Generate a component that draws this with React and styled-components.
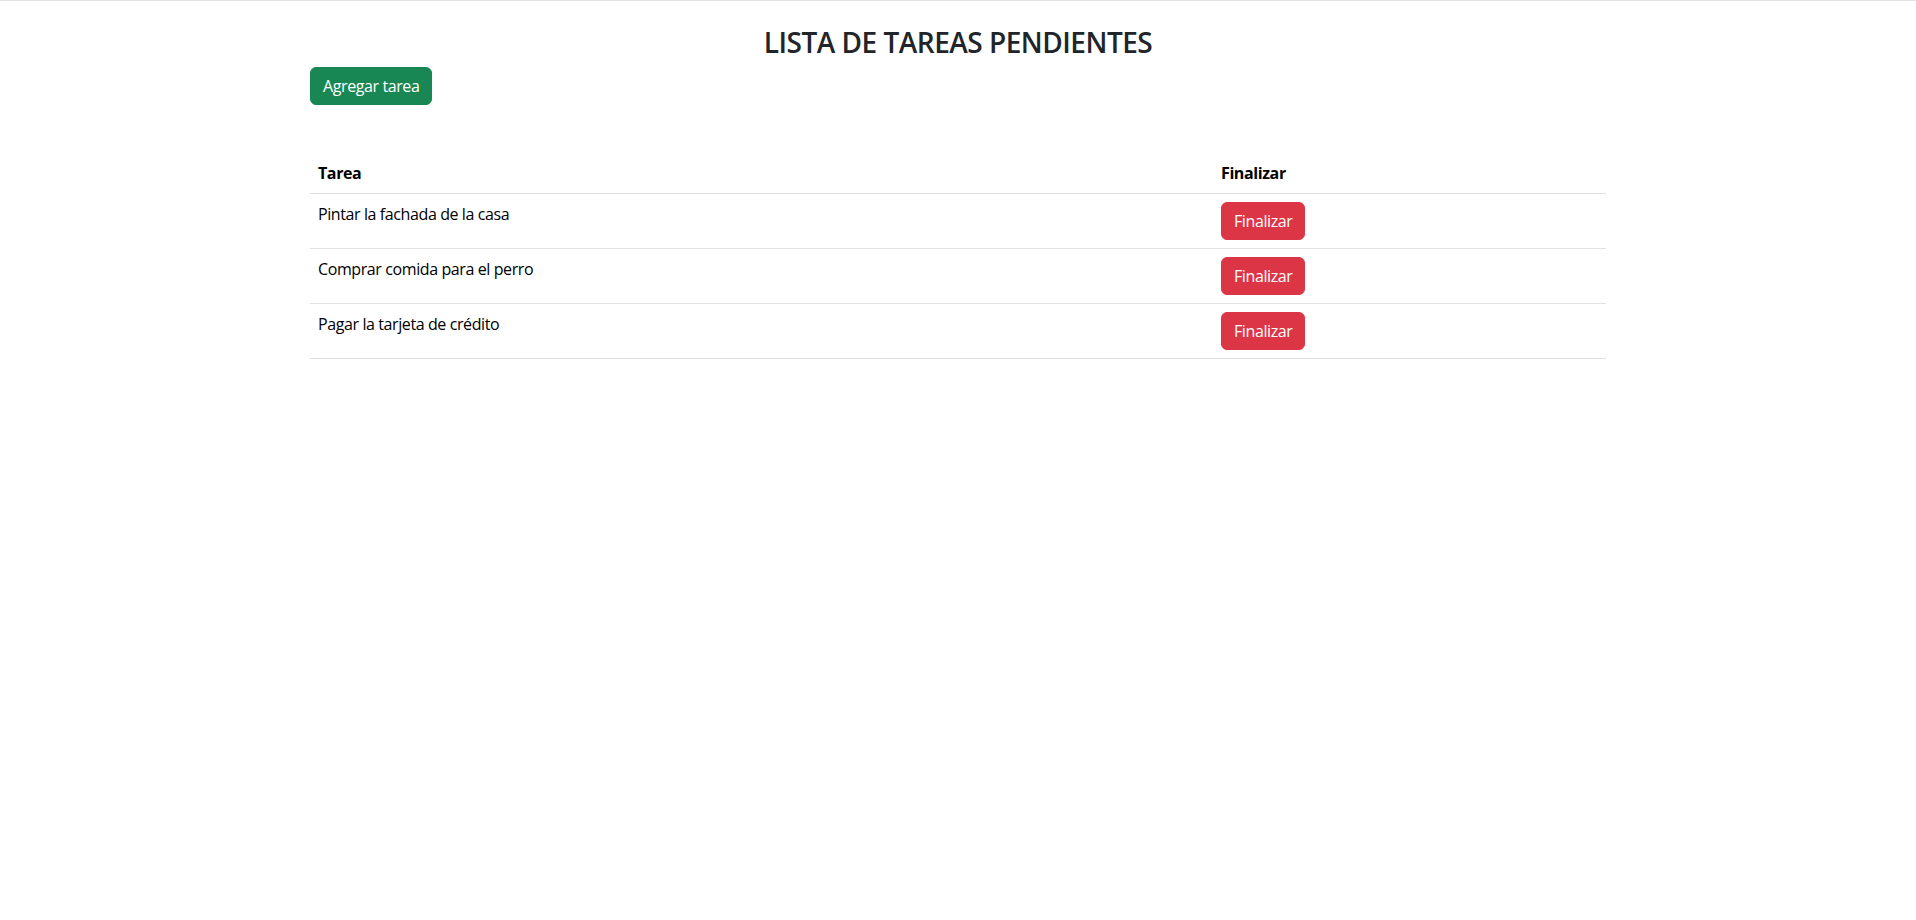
import React from 'react';
import styled, { createGlobalStyle } from 'styled-components';

const GlobalStyle = createGlobalStyle`
  *, *::before, *::after {
    box-sizing: border-box;
  }
  body {
    margin: 0;
    border-top: 1px solid #e2e2e2;
    font-family: "Segoe UI", "Open Sans", "Noto Sans", "Liberation Sans", sans-serif;
    font-size: 16px;
    line-height: 1.5;
    letter-spacing: -0.4px;
    color: #212529;
    background-color: #fff;
  }
`;

const Container = styled.div`
  max-width: 1320px;
  margin: 0 auto;
  padding: 25px 12px 0;
`;

const Title = styled.h3`
  margin: 0 0 7px;
  font-size: 28px;
  font-weight: 600;
  line-height: 1.2;
  letter-spacing: -0.5px;
  text-align: center;
  color: #212529;
`;

const Button = styled.button`
  display: inline-block;
  padding: 6px 12px;
  font-family: inherit;
  font-size: 16px;
  line-height: 1.5;
  letter-spacing: inherit;
  color: #fff;
  background-color: ${(p) => (p.variant === 'danger' ? '#dc3545' : '#198754')};
  border: 1px solid ${(p) => (p.variant === 'danger' ? '#dc3545' : '#198754')};
  border-radius: 6px;
  cursor: pointer;
`;

const Table = styled.table`
  width: 100%;
  margin-top: 48px;
  border-collapse: collapse;
  color: #000;
`;

const HeadCell = styled.th`
  padding: 8px;
  text-align: left;
  vertical-align: top;
  font-weight: 700;
  border-bottom: 1px solid #dee2e6;
  width: ${(p) => p.width || 'auto'};
`;

const Cell = styled.td`
  padding: 8px;
  vertical-align: top;
  border-bottom: 1px solid #dee2e6;
`;

const tareas = [
  'Pintar la fachada de la casa',
  'Comprar comida para el perro',
  'Pagar la tarjeta de crédito',
];

const App = () => {
  return (
    <>
      <GlobalStyle />
      <Container>
        <Title>LISTA DE TAREAS PENDIENTES</Title>
        <Button>Agregar tarea</Button>
        <Table>
          <thead>
            <tr>
              <HeadCell width="903px">Tarea</HeadCell>
              <HeadCell>Finalizar</HeadCell>
            </tr>
          </thead>
          <tbody>
            {tareas.map((t) => (
              <tr key={t}>
                <Cell>{t}</Cell>
                <Cell>
                  <Button variant="danger">Finalizar</Button>
                </Cell>
              </tr>
            ))}
          </tbody>
        </Table>
      </Container>
    </>
  );
};

export default App;
